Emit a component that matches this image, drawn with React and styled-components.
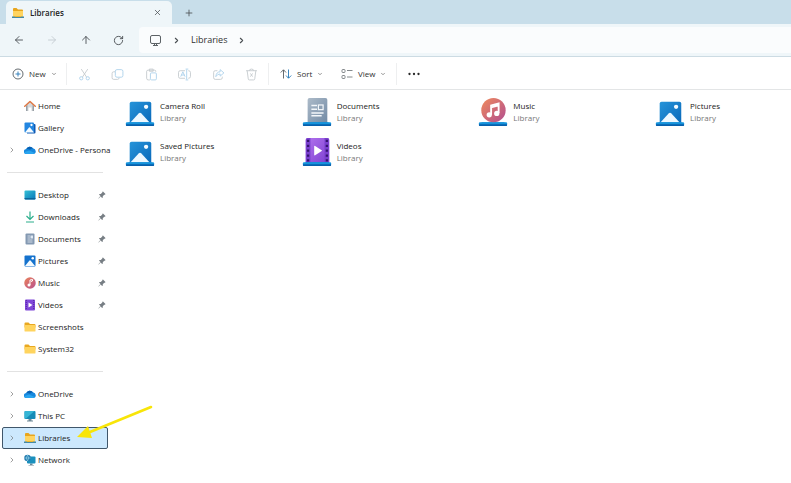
import React from 'react';
import styled, { createGlobalStyle } from 'styled-components';
import { ArrowLeft, ArrowRight, ArrowUp, ChevronDown, ChevronRight, Plus, RotateCw, X } from 'lucide-react';


const GlobalStyle = createGlobalStyle`
  * {
    box-sizing: border-box;
  }
  body {
    margin: 0;
    background: #ffffff;
    color: #222222;
    font-family: 'Open Sans', 'Noto Sans', sans-serif;
    font-size: 8px;
    line-height: 12px;
    overflow: hidden;
  }
  button {
    margin: 0;
    padding: 0;
    border: 0;
    background: none;
    color: inherit;
    font: inherit;
  }
  svg {
    display: block;
    flex: none;
  }
`;

const Window = styled.div`
  display: flex;
  flex-direction: column;
  min-height: 100vh;
`;

const TitleBar = styled.div`
  display: flex;
  align-items: flex-end;
  height: 24px;
  padding-left: 6px;
  background: #c8deea;
`;

const Tab = styled.div`
  display: flex;
  align-items: center;
  justify-content: space-between;
  width: 166px;
  height: 23px;
  padding: 0 8px 0 6px;
  border-radius: 5px 5px 0 0;
  background: #eff6f9;
`;

const TabTitle = styled.button`
  display: flex;
  align-items: center;
  gap: 6px;
  color: #222222;
  font-weight: 600;
`;

const IconButton = styled.button`
  display: flex;
  align-items: center;
  justify-content: center;
  width: ${(props) => props.$width || 14}px;
  height: 22px;
  color: ${(props) => (props.$faded ? '#c3cbd0' : '#4a4f53')};
`;

const NewTab = styled(IconButton)`
  margin-left: 10px;
`;

const NavBar = styled.div`
  display: flex;
  align-items: center;
  height: 33px;
  padding-left: 2px;
  border-bottom: 1px solid #ccdbe3;
  background: #eff6f9;
`;

const AddressBar = styled.div`
  display: flex;
  flex: 1;
  align-items: center;
  gap: 10px;
  height: 26px;
  margin-left: 4px;
  padding-left: 10px;
  border-radius: 4px 0 0 4px;
  background: #fafcfd;
  color: #4a4f53;
  font-size: 9px;
`;

const Crumb = styled.button`
  color: #303030;
`;

const Toolbar = styled.div`
  display: flex;
  align-items: center;
  height: 33px;
  padding: 2px 0 0 12px;
  border-bottom: 1px solid #e3e5e6;
`;

const MenuButton = styled.button`
  display: flex;
  align-items: center;
  gap: 5px;
  width: ${(props) => props.$width}px;
  height: 22px;
  color: #303030;
`;

const Divider = styled.div`
  width: 1px;
  height: 22px;
  background: #eeeff0;
`;

const Actions = styled.div`
  display: flex;
  justify-content: space-between;
  width: 201px;
  padding-left: 1px;
`;

const ViewMenus = styled.div`
  display: flex;
  padding-left: 11px;
`;

const Body = styled.div`
  display: flex;
  flex: 1;
`;

const Sidebar = styled.nav`
  width: 110px;
  flex: none;
  padding: 5px 2px 0;
`;

const Separator = styled.hr`
  height: 1px;
  margin: 11px 5px;
  border: 0;
  background: #e2e2e2;
`;

const NavRow = styled.div`
  position: relative;
  display: flex;
  height: 22px;
  border: 1px solid ${(props) => (props.$selected ? '#40566a' : 'transparent')};
  border-radius: 2px;
  background: ${(props) => (props.$selected ? '#cce8fd' : 'transparent')};
`;

const NavButton = styled.button`
  display: grid;
  flex: 1;
  grid-template-columns: 20px 12px minmax(0, 1fr) auto;
  align-items: center;
  min-width: 0;
  padding-left: 1px;
  text-align: left;
`;

const Expander = styled.span`
  display: flex;
  justify-content: center;
  padding-right: 4px;
  color: #707070;
`;

const Label = styled.span`
  padding-left: 2px;
  white-space: nowrap;
`;

const PinSlot = styled.span`
  padding-right: 1px;
`;

/* Lies over the row and reaches into the file area */
const Pointer = styled.svg`
  position: absolute;
  top: -24px;
  left: 73px;
  z-index: 1;
  pointer-events: none;
`;

const Files = styled.main`
  display: grid;
  flex: 1;
  grid-template-columns: repeat(3, 1fr) 136px;
  grid-auto-rows: 40px;
  align-content: start;
  padding: 2px 0 0 15px;
`;

const File = styled.button`
  display: flex;
  align-items: center;
  gap: 5px;
  text-align: left;
`;

const FileText = styled.span`
  display: flex;
  flex-direction: column;
`;

const FileKind = styled.span`
  color: #777777;
`;


function FolderIcon() {
  return (
    <svg width="12" height="12" viewBox="0 0 24 24">
      <path d="M1 5q0-2 2-2h6l3 3h9q2 0 2 2v5H1z" fill="#e9a820" />
      <path d="M1 10q0-2 2-2h18q2 0 2 2v10q0 1-2 1H3q-2 0-2-1z" fill="#ffd45e" />
    </svg>
  );
}

function LibraryFolderIcon() {
  return (
    <svg width="12" height="12" viewBox="0 0 24 24">
      <path d="M2 4q0-2 2-2h5l3 3h8q2 0 2 2v6H2z" fill="#e8a51d" />
      <path d="M2 8h20v12H2z" fill="#ffd460" />
      <path d="M0 19h24v3H0z" fill="#4689a5" />
      <path d="M6 18h12v2H6z" fill="#edb730" />
    </svg>
  );
}

function HomeIcon() {
  return (
    <svg width="12" height="12" viewBox="0 0 24 24">
      <path d="M4 10l8-7 8 7v12h-5v-7H9v7H4z" fill="#d5d9dc" />
      <path d="M4 12l3-2v12H4zM17 10l3 2v10h-3z" fill="#989fa5" />
      <path d="M1.500 12.500L12 3l10.500 9.500" fill="none" stroke="#df7845" strokeWidth="3" strokeLinecap="round" strokeLinejoin="round" />
    </svg>
  );
}

function PictureIcon() {
  return (
    <svg width="12" height="12" viewBox="0 0 24 24">
      <rect x="1" y="1" width="22" height="22" rx="2" fill="#1572cd" />
      <path d="M2 22l9-11q1-1 2 0l9 11z" fill="#f4fbff" />
      <circle cx="17.500" cy="6.500" r="2.500" fill="#ffffff" />
    </svg>
  );
}

function GalleryIcon() {
  return (
    <svg width="12" height="12" viewBox="0 0 24 24">
      <path d="M6 4h15q2 0 2 2v15q0 2-2 2H6z" fill="#1059b2" />
      <rect x="1" y="1" width="19" height="20" rx="2" fill="#2386e0" />
      <path d="M2 21l8-10q1-1 2 0l8 10z" fill="#f4fbff" />
      <circle cx="15" cy="6" r="2.300" fill="#ffffff" />
    </svg>
  );
}

function CloudIcon() {
  return (
    <svg width="12" height="12" viewBox="0 0 24 24">
      <path d="M5 20a5 5 0 0 1-.5-10A8 8 0 0 1 18 8.500q5 1 5.500 6 0 5.500-5 5.500z" fill="#1687dd" />
      <path d="M4.500 10A8 8 0 0 1 18 8.500q-4 0-6 3-3-2-7.500-1.500z" fill="#0860b2" />
      <path d="M5 20q-4-.5-4.500-4l10-3 11 5q-1 2-4 2z" fill="#2aa5ef" />
    </svg>
  );
}

function DesktopIcon() {
  return (
    <svg width="12" height="12" viewBox="0 0 24 24">
      <defs>
        <linearGradient id="desktop" x1="0" y1="0" x2="1" y2="1">
          <stop offset="0" stopColor="#35c1d6" />
          <stop offset="1" stopColor="#0876b9" />
        </linearGradient>
      </defs>
      <rect x="1" y="3" width="22" height="18" rx="2" fill="url(#desktop)" />
      <path d="M1 18h22v1q0 2-2 2H3q-2 0-2-2z" fill="#0a659b" />
    </svg>
  );
}

function DownloadIcon() {
  return (
    <svg width="12" height="12" viewBox="0 0 24 24" fill="none" stroke="#2cae8c" strokeWidth="2.400">
      <path d="M12 1v15M5 10l7 7 7-7M4 22h16" />
    </svg>
  );
}

function DocumentIcon() {
  return (
    <svg width="12" height="12" viewBox="0 0 24 24">
      <rect x="3" y="1" width="18" height="22" rx="2" fill="#8499b2" />
      <path d="M7 6h5M7 10h5M7 14h10M7 18h10" stroke="#e7eef5" strokeWidth="1.500" />
      <rect x="13" y="5" width="5" height="6" fill="#dfe9f3" />
    </svg>
  );
}

function MusicIcon() {
  return (
    <svg width="12" height="12" viewBox="0 0 24 24">
      <defs>
        <linearGradient id="music" x1="0" y1="0" x2="1" y2="1">
          <stop offset="0" stopColor="#eb835a" />
          <stop offset="1" stopColor="#b8508e" />
        </linearGradient>
      </defs>
      <circle cx="12" cy="12" r="11.500" fill="url(#music)" />
      <path d="M12 16V6l5-1v3l-3 1" fill="none" stroke="#ffffff" strokeWidth="2" />
      <circle cx="10" cy="16" r="3" fill="#ffffff" />
    </svg>
  );
}

function VideoIcon() {
  return (
    <svg width="12" height="12" viewBox="0 0 24 24">
      <rect x="2" y="1" width="20" height="22" rx="2" fill="#8048d8" />
      <path d="M4.500 2v20M19.500 2v20" stroke="#5522a1" strokeWidth="2" strokeDasharray="2 2" />
      <path d="M9 7l8 5-8 5z" fill="#ffffff" />
    </svg>
  );
}

function ComputerIcon() {
  return (
    <svg width="12" height="12" viewBox="0 0 24 24">
      <path d="M9 17h6v4h3v2H6v-2h3z" fill="#6f8998" />
      <rect x="1" y="2" width="22" height="16" rx="2" fill="#158bb7" />
      <path d="M3 2h18L4 17H1V4q0-2 2-2z" fill="#36b5d5" />
    </svg>
  );
}

function NetworkIcon() {
  return (
    <svg width="12" height="12" viewBox="0 0 24 24">
      <path d="M12 19h5v3h3v1H9v-1h3z" fill="#6f8998" />
      <rect x="6" y="5" width="17" height="14" rx="2" fill="#1a90bd" />
      <circle cx="7" cy="8" r="6.500" fill="#227aae" />
      <path d="M1 8h12M7 2q-5 6 0 12M7 2q5 6 0 12" fill="none" stroke="#9fdcef" strokeWidth="1.200" />
    </svg>
  );
}

function PinIcon() {
  return (
    <svg width="8" height="8" viewBox="0 0 16 16">
      <path d="M10 1l5 5-1 1.500-1.500.2-3 3 .1 2.300-1.200 1.200-3.300-3.300L1.500 15 .8 14.300 5 10 2 7l1.300-1.200 2.300.2 3-3 .2-1.500z" fill="#777e84" />
    </svg>
  );
}

function Base() {
  return (
    <g>
      <path d="M4 27h24l2 3H2z" fill="#1784d0" />
      <path d="M1 28q0-1 1-1h28q1 0 1 1v2H1z" fill="#1594dc" />
      <path d="M1 29h30v1q0 1-1 1H2q-1 0-1-1z" fill="#0760ad" />
    </g>
  );
}

function PictureLibrary({ id }) {
  return (
    <svg width="30" height="30" viewBox="0 0 32 32">
      <defs>
        <linearGradient id={id} x1="0" y1="0" x2="1" y2="1">
          <stop offset="0" stopColor="#2794d9" />
          <stop offset="1" stopColor="#0867b9" />
        </linearGradient>
      </defs>
      <rect x="5" y="5" width="23" height="24" rx="2" fill={`url(#${id})`} />
      <path d="M5 28l9.500-10.500q1.500-1.500 3 0L27 28z" fill="#eef8ff" />
      <circle cx="22.500" cy="10.500" r="2.300" fill="#f4fbff" />
      <Base />
    </svg>
  );
}

function DocumentLibrary() {
  return (
    <svg width="30" height="30" viewBox="0 0 32 32">
      <defs>
        <linearGradient id="paper" x1="0" y1="0" x2="1" y2="1">
          <stop offset="0" stopColor="#adbbc9" />
          <stop offset="1" stopColor="#718aa5" />
        </linearGradient>
      </defs>
      <rect x="6" y="1" width="21" height="27" rx="2" fill="url(#paper)" />
      <path d="M10 9h6M10 13h6M10 17h13M10 20h11" stroke="#f4f7fa" strokeWidth="1.600" />
      <rect x="17.500" y="8.500" width="5" height="5" fill="#8da0b4" stroke="#f4f7fa" strokeWidth="1.300" />
      <Base />
    </svg>
  );
}

function MusicLibrary() {
  return (
    <svg width="30" height="30" viewBox="0 0 32 32">
      <defs>
        <linearGradient id="disc" x1="0" y1="0" x2="1" y2="1">
          <stop offset="0" stopColor="#f08b5c" />
          <stop offset="1" stopColor="#b14d91" />
        </linearGradient>
      </defs>
      <Base />
      <circle cx="16.500" cy="14" r="13" fill="url(#disc)" />
      <path d="M14 19V9l8-2v10M14 11l8-2" fill="none" stroke="#ffffff" strokeWidth="2" />
      <circle cx="12" cy="19" r="2.800" fill="#ffffff" />
      <circle cx="20" cy="17.500" r="2.800" fill="#ffffff" />
    </svg>
  );
}

function VideoLibrary() {
  return (
    <svg width="30" height="30" viewBox="0 0 32 32">
      <defs>
        <linearGradient id="film" x1="0" y1="0" x2="1" y2="1">
          <stop offset="0" stopColor="#b272ee" />
          <stop offset="1" stopColor="#7c40d0" />
        </linearGradient>
      </defs>
      <rect x="4" y="1" width="25" height="27" rx="2" fill="url(#film)" />
      <path d="M4 3q0-2 2-2h3v27H4zM24 1h3q2 0 2 2v25h-5z" fill="#7a40ce" />
      <path d="M6.500 3v24M26.500 3v24" stroke="#35126f" strokeWidth="2.400" strokeDasharray="2.400 2.800" />
      <path d="M13 10q0-1 1-.5l7 4.500q.7.500 0 1l-7 4.500q-1 .5-1-.5z" fill="#ffffff" />
      <Base />
    </svg>
  );
}

function ScreenIcon() {
  return (
    <svg width="13" height="13" viewBox="0 0 26 26" fill="none" stroke="#5c6266" strokeWidth="2">
      <rect x="3" y="3" width="20" height="16" rx="3" />
      <path d="M8 23h10M11 19v4M15 19v4" />
    </svg>
  );
}

function CirclePlusIcon() {
  return (
    <svg width="12" height="12" viewBox="0 0 24 24" fill="none" strokeWidth="1.800">
      <circle cx="12" cy="12" r="10" stroke="#565c61" />
      <path d="M12 7v10M7 12h10" stroke="#2679b8" />
    </svg>
  );
}

function SortIcon() {
  return (
    <svg width="12" height="12" viewBox="0 0 24 24" fill="none" strokeWidth="1.800">
      <path d="M7 21V4M1.500 9L7 3.500l5 5.500" stroke="#565c61" />
      <path d="M17 3v17M12 15l5 5.500 5.500-5.500" stroke="#2679b8" />
    </svg>
  );
}

function ViewIcon() {
  return (
    <svg width="12" height="12" viewBox="0 0 24 24" fill="none" stroke="#666c70" strokeWidth="1.600">
      <rect x="2" y="3" width="6" height="6" rx="1.500" />
      <rect x="2" y="15" width="6" height="6" rx="1.500" />
      <path d="M12 5h11M12 18h11" />
    </svg>
  );
}

function MoreIcon() {
  return (
    <svg width="12" height="12" viewBox="0 0 24 24" fill="#292929">
      <circle cx="3" cy="12" r="2.300" />
      <circle cx="12" cy="12" r="2.300" />
      <circle cx="21" cy="12" r="2.300" />
    </svg>
  );
}

/* Disabled toolbar drawings: a grey part and a blue part */
const actions = [
  { name: 'Cut', grey: 'M6 2l10 15M18 2L8 17', blue: 'M9 19a3 3 0 1 1-6 0 3 3 0 0 1 6 0zM21 19a3 3 0 1 1-6 0 3 3 0 0 1 6 0z' },
  { name: 'Copy', grey: 'M8 7H5q-3 0-3 3v8q0 3 3 3h7q3 0 3-3', blue: 'M11 3h8q3 0 3 3v8q0 3-3 3h-8q-3 0-3-3V6q0-3 3-3z' },
  { name: 'Paste', grey: 'M9 22H6q-3 0-3-3V6q0-2 3-2h12q2 0 2 3M8 2h7v4H8z', blue: 'M12 9h7q2 0 2 2v9q0 2-2 2h-7q-2 0-2-2v-9q0-2 2-2z' },
  { name: 'Rename', grey: 'M13 5H4Q1 5 1 8v8q0 3 3 3h9M19 5q4 0 4 3v8q0 3-4 3', blue: 'M5 16l4-9 4 9M6 13h6M16 3v18M14 2h5M14 22h5' },
  { name: 'Share', grey: 'M10 5H6Q3 5 3 8v10q0 3 3 3h10q3 0 3-3v-2', blue: 'M15 3l7 6-7 6v-4q-5 0-8 5 1-9 8-9z' },
  { name: 'Delete', grey: 'M2 5h20M8 5q0-3 4-3t4 3M4 5l2 15q0 2 2 2h8q2 0 2-2l2-15M10 10l4 6M14 10l-4 6', blue: '' },
];

const quickAccess = [
  { name: 'Home', icon: <HomeIcon /> },
  { name: 'Gallery', icon: <GalleryIcon /> },
  { name: 'OneDrive - Persona', icon: <CloudIcon />, expands: true },
];

const pinned = [
  { name: 'Desktop', icon: <DesktopIcon />, pin: true },
  { name: 'Downloads', icon: <DownloadIcon />, pin: true },
  { name: 'Documents', icon: <DocumentIcon />, pin: true },
  { name: 'Pictures', icon: <PictureIcon />, pin: true },
  { name: 'Music', icon: <MusicIcon />, pin: true },
  { name: 'Videos', icon: <VideoIcon />, pin: true },
  { name: 'Screenshots', icon: <FolderIcon /> },
  { name: 'System32', icon: <FolderIcon /> },
];

const places = [
  { name: 'OneDrive', icon: <CloudIcon />, expands: true },
  { name: 'This PC', icon: <ComputerIcon />, expands: true },
  { name: 'Libraries', icon: <LibraryFolderIcon />, expands: true, selected: true },
  { name: 'Network', icon: <NetworkIcon />, expands: true },
];

const libraries = [
  { name: 'Camera Roll', icon: <PictureLibrary id="camera" /> },
  { name: 'Documents', icon: <DocumentLibrary /> },
  { name: 'Music', icon: <MusicLibrary /> },
  { name: 'Pictures', icon: <PictureLibrary id="pictures" /> },
  { name: 'Saved Pictures', icon: <PictureLibrary id="saved" /> },
  { name: 'Videos', icon: <VideoLibrary /> },
];

function NavItem({ item }) {
  return (
    <NavRow $selected={item.selected}>
      <NavButton>
        <Expander>{item.expands && <ChevronRight size={8} />}</Expander>
        {item.icon}
        <Label>{item.name}</Label>
        {item.pin && <PinSlot><PinIcon /></PinSlot>}
      </NavButton>
      {item.selected && (
        <Pointer width="80" height="40" viewBox="0 0 80 40">
          <path d="M75 3L14 28" stroke="#f8e508" strokeWidth="2.600" strokeLinecap="round" />
          <path d="M1 33l11-11 4 12z" fill="#f8e508" />
        </Pointer>
      )}
    </NavRow>
  );
}

export default function App() {
  return (
    <Window>
      <GlobalStyle />
      <TitleBar>
        <Tab>
          <TabTitle><LibraryFolderIcon />Libraries</TabTitle>
          <IconButton aria-label="Close tab"><X size={9} /></IconButton>
        </Tab>
        <NewTab aria-label="New tab"><Plus size={10} /></NewTab>
      </TitleBar>
      <NavBar>
        <IconButton $width={33} aria-label="Back"><ArrowLeft size={12} strokeWidth={1.8} /></IconButton>
        <IconButton $width={34} $faded aria-label="Forward"><ArrowRight size={12} strokeWidth={1.8} /></IconButton>
        <IconButton $width={33} aria-label="Up"><ArrowUp size={12} strokeWidth={1.8} /></IconButton>
        <IconButton $width={33} aria-label="Refresh"><RotateCw size={11} strokeWidth={2} /></IconButton>
        <AddressBar>
          <ScreenIcon />
          <ChevronRight size={9} strokeWidth={3} />
          <Crumb>Libraries</Crumb>
          <ChevronRight size={9} strokeWidth={3} />
        </AddressBar>
      </NavBar>
      <Toolbar>
        <MenuButton $width={54}><CirclePlusIcon />New<ChevronDown size={6} /></MenuButton>
        <Divider />
        <Actions>
          {actions.map((action) => (
            <IconButton key={action.name} $width={33} aria-label={action.name}>
              <svg width="13" height="13" viewBox="0 0 24 24" fill="none" strokeWidth="1.600">
                <path d={action.grey} stroke="#c3c8cc" />
                <path d={action.blue} stroke="#a9cfea" />
              </svg>
            </IconButton>
          ))}
        </Actions>
        <Divider />
        <ViewMenus>
          <MenuButton $width={61}><SortIcon />Sort<ChevronDown size={6} /></MenuButton>
          <MenuButton $width={55}><ViewIcon />View<ChevronDown size={6} /></MenuButton>
        </ViewMenus>
        <Divider />
        <IconButton $width={33} aria-label="See more"><MoreIcon /></IconButton>
      </Toolbar>
      <Body>
        <Sidebar>
          {quickAccess.map((item) => <NavItem key={item.name} item={item} />)}
          <Separator />
          {pinned.map((item) => <NavItem key={item.name} item={item} />)}
          <Separator />
          {places.map((item) => <NavItem key={item.name} item={item} />)}
        </Sidebar>
        <Files>
          {libraries.map((library) => (
            <File key={library.name}>
              {library.icon}
              <FileText>
                <span>{library.name}</span>
                <FileKind>Library</FileKind>
              </FileText>
            </File>
          ))}
        </Files>
      </Body>
    </Window>
  );
}
